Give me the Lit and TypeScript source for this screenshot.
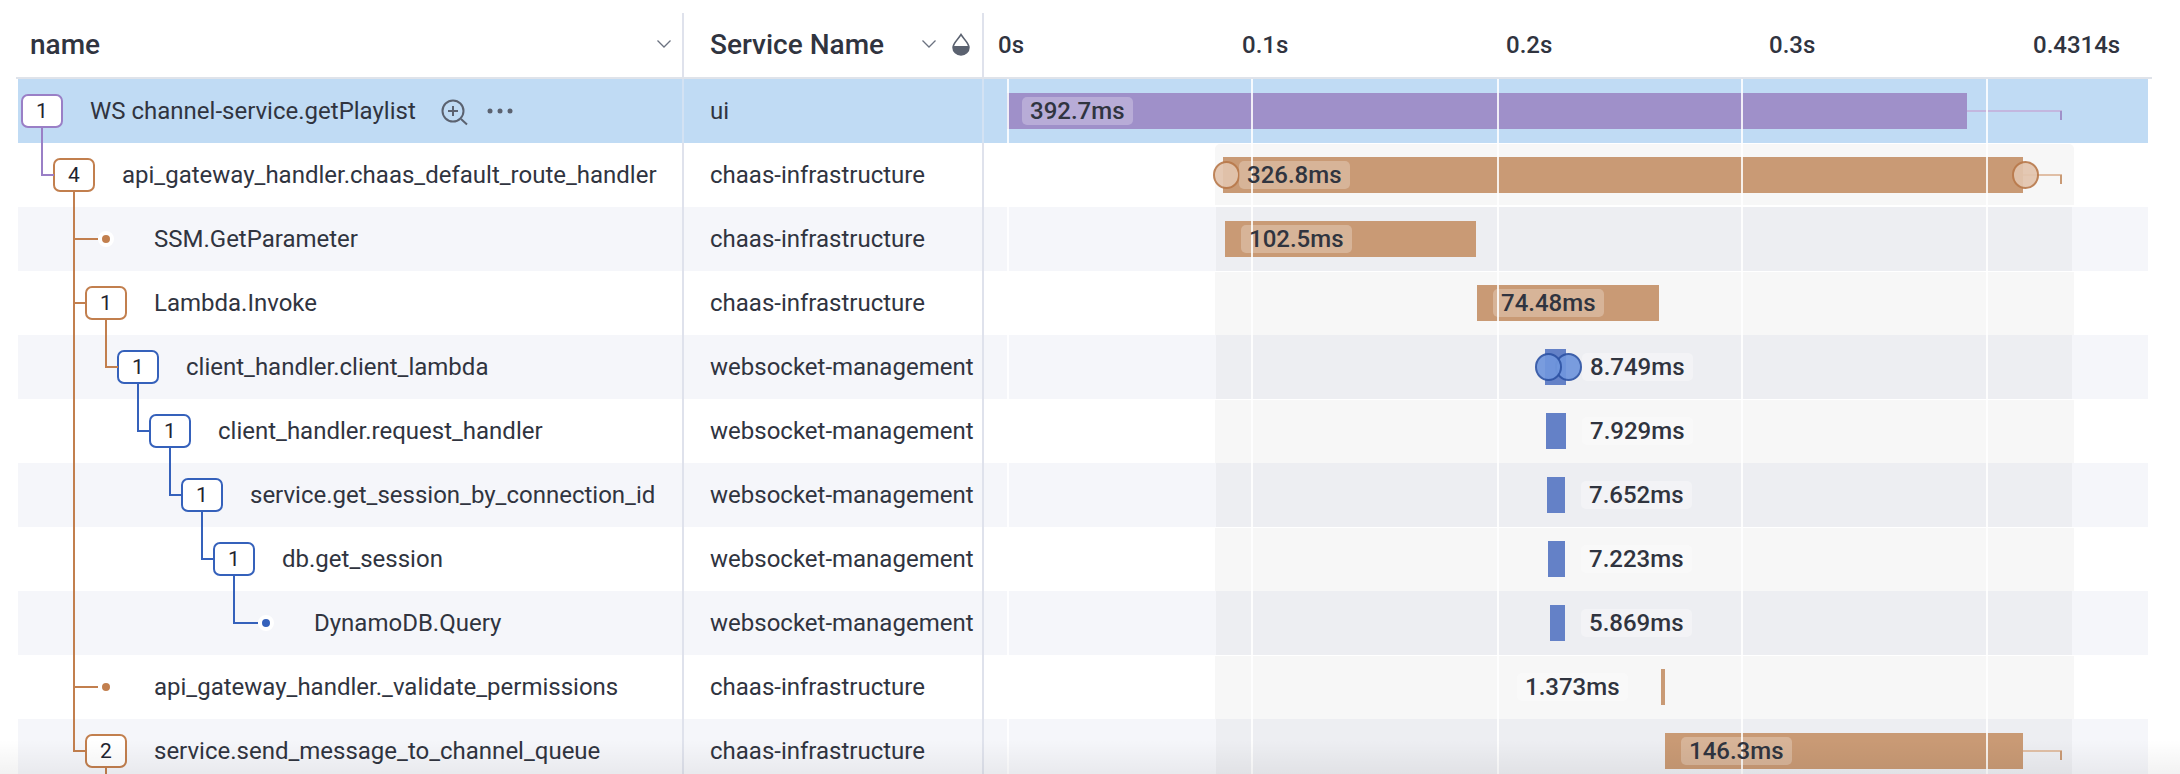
import { LitElement, html, svg, css } from 'lit';
import { customElement } from 'lit/decorators.js';

const ROW_H = 64;
const TL_X = 984; // left edge of the timeline column, page coords
const ROW_TOP = 79;

const COLORS: Record<string, { line: string; bar: string; whisker: string; halo: string; ring: string }> = {
  purple: { line: '#9a7fc6', bar: '#9f90c9', whisker: '#c3b7df', halo: '#b3a7d6', ring: '#8a6fb8' },
  orange: { line: '#c27f4e', bar: '#c99a75', whisker: '#e0bfa6', halo: '#e3c5ae', ring: '#b97a4c' },
  blue: { line: '#3561bb', bar: '#6481c7', whisker: '#a9bbe3', halo: '#7096dd', ring: '#2f54a5' },
};

interface Span {
  name: string;
  service: string;
  depth: number;
  parent: number;
  color: string;
  count?: number;
  bar: [number, number];
  label: number;
  whisker?: number;
  circles?: number[];
}

const spans: Span[] = [
  { name: 'WS channel-service.getPlaylist', service: 'ui', depth: 0, parent: -1, color: 'purple', count: 1, bar: [1007, 1967], label: 1022, whisker: 2062 },
  { name: 'api_gateway_handler.chaas_default_route_handler', service: 'chaas-infrastructure', depth: 1, parent: 0, color: 'orange', count: 4, bar: [1223, 2023], label: 1239, whisker: 2062, circles: [1226, 2025] },
  { name: 'SSM.GetParameter', service: 'chaas-infrastructure', depth: 2, parent: 1, color: 'orange', bar: [1225, 1476], label: 1241 },
  { name: 'Lambda.Invoke', service: 'chaas-infrastructure', depth: 2, parent: 1, color: 'orange', count: 1, bar: [1477, 1659], label: 1493 },
  { name: 'client_handler.client_lambda', service: 'websocket-management', depth: 3, parent: 3, color: 'blue', count: 1, bar: [1545, 1566], label: 1582, circles: [1568, 1548] },
  { name: 'client_handler.request_handler', service: 'websocket-management', depth: 4, parent: 4, color: 'blue', count: 1, bar: [1546, 1566], label: 1582 },
  { name: 'service.get_session_by_connection_id', service: 'websocket-management', depth: 5, parent: 5, color: 'blue', count: 1, bar: [1547, 1565], label: 1581 },
  { name: 'db.get_session', service: 'websocket-management', depth: 6, parent: 6, color: 'blue', count: 1, bar: [1548, 1565], label: 1581 },
  { name: 'DynamoDB.Query', service: 'websocket-management', depth: 7, parent: 7, color: 'blue', bar: [1550, 1565], label: 1581 },
  { name: 'api_gateway_handler._validate_permissions', service: 'chaas-infrastructure', depth: 2, parent: 1, color: 'orange', bar: [1661, 1665], label: 1517 },
  { name: 'service.send_message_to_channel_queue', service: 'chaas-infrastructure', depth: 2, parent: 1, color: 'orange', count: 2, bar: [1665, 2023], label: 1681, whisker: 2062 },
];

const durations = ['392.7ms', '326.8ms', '102.5ms', '74.48ms', '8.749ms', '7.929ms', '7.652ms', '7.223ms', '5.869ms', '1.373ms', '146.3ms'];

const axis = [
  { text: '0s', x: 998 },
  { text: '0.1s', x: 1242 },
  { text: '0.2s', x: 1506 },
  { text: '0.3s', x: 1769 },
  { text: '0.4314s', x: 2033 },
];
const ticks = [1007, 1251, 1497, 1741, 1986];

const chevron = html`<svg class="chev" width="16" height="10" viewBox="0 0 16 10"><path d="M1.5 1.5 8 8l6.500-6.500" fill="none" stroke="#6b7280" stroke-width="1.3"/></svg>`;

@customElement('app-root')
export class AppRoot extends LitElement {
  static styles = css`
    :host {
      display: block;
      position: relative;
      width: 2180px;
      height: 774px;
      overflow: hidden;
      background: #fff;
      font-family: Roboto, 'Liberation Sans', sans-serif;
      color: #30343f;
    }
    .head {
      display: grid;
      grid-template-columns: 666px 300px 1fr;
      margin: 13px 28px 0 16px;
      padding-left: 2px;
      height: 66px;
      border-bottom: 2px solid #dfe3ea;
      box-sizing: border-box;
      font-size: 28px;
      font-weight: 500;
    }
    .hcell {
      display: flex;
      align-items: center;
      justify-content: space-between;
      border-right: 2px solid #dfe2ec;
      padding-bottom: 2px;
    }
    .hname { padding-left: 12px; padding-right: 10px; }
    .hservice { padding-left: 26px; padding-right: 12px; }
    .hservice .tools { display: flex; align-items: center; gap: 15px; }
    .axis { position: relative; }
    .axis span {
      position: absolute;
      top: 18px;
      font-size: 24px;
      line-height: 28px;
      font-weight: 500;
    }
    .rows {
      position: relative;
      margin: 0 32px 0 18px;
    }
    .row {
      display: grid;
      grid-template-columns: 666px 300px 1fr;
      height: 64px;
      font-size: 24px;
      position: relative;
    }
    .row.alt { background: #f5f6fa; }
    .row.sel { background: #c0dbf4; }
    .cell {
      display: flex;
      align-items: center;
      border-right: 2px solid #dfe2ec;
      white-space: nowrap;
      position: relative;
      z-index: 1;
    }
    .sel .cell { border-right-color: #d3e2f3; }
    .service { padding-left: 26px; }
    .badge {
      box-sizing: border-box;
      width: 42px;
      height: 34px;
      margin-left: 3px;
      flex: none;
      border: 2px solid;
      border-radius: 7px;
      background: #fff;
      display: flex;
      align-items: center;
      justify-content: center;
      font-size: 21px;
      color: #1f2430;
    }
    .dot {
      width: 42px;
      margin-left: 3px;
      flex: none;
      display: flex;
      justify-content: center;
    }
    .dot i {
      display: block;
      width: 8px;
      height: 8px;
      border-radius: 50%;
      border: 4px solid #fff;
    }
    .label { margin-left: 27px; }
    .actions { display: flex; align-items: center; gap: 18px; margin-left: 25px; }
    .actions .zoom { margin-top: 5px; }
    .timeline { border-right: none; z-index: auto; }
    .band {
      position: absolute;
      top: 0;
      bottom: 0;
      left: 232px;
      width: 856px;
      background: #edeef2;
    }
    .band.even {
      top: 1px;
      bottom: 0;
      left: 231px;
      width: 859px;
      background: #f7f7f7;
    }
    .band.first { bottom: 2px; border-radius: 5px 5px 0 0; }
    .bar { position: absolute; top: 14px; height: 36px; }
    .whisker { position: absolute; top: 31px; height: 2px; }
    .cap { position: absolute; top: 32px; height: 9px; width: 2px; }
    .circle {
      position: absolute;
      top: 18px;
      width: 27px;
      height: 28px;
      box-sizing: border-box;
      border: 2px solid;
      border-radius: 50%;
      opacity: 0.92;
    }
    .pill {
      position: absolute;
      top: 18px;
      height: 28px;
      padding: 0 8px;
      border-radius: 5px;
      display: flex;
      align-items: center;
      font-weight: 500;
      font-size: 24px;
      background: rgba(255, 255, 255, 0.26);
      z-index: 3;
    }
    .pill.out { background: rgba(255, 255, 255, 0.33); }
    .tick {
      position: absolute;
      top: 0;
      bottom: 0;
      width: 2px;
      background: rgba(255, 255, 255, 0.85);
      z-index: 2;
    }
    .links { position: absolute; left: 0; top: 0; z-index: 1; pointer-events: none; }
    .fade {
      position: absolute;
      left: 0;
      right: 0;
      bottom: 0;
      height: 34px;
      background: linear-gradient(rgba(0, 0, 0, 0), rgba(0, 0, 0, 0.05));
      z-index: 5;
    }
  `;

  // tree lines, drawn from the parent's badge down to the child's row
  private links() {
    const centerX = (depth: number) => 24 + depth * 32;
    return spans.map((s, i) => {
      if (s.parent < 0) return '';
      const p = spans[s.parent];
      const x = centerX(p.depth);
      const y = i * ROW_H + ROW_H / 2;
      const y0 = s.parent * ROW_H + ROW_H / 2 + 15;
      const endX = centerX(s.depth) - (s.count ? 20 : 8);
      return svg`<path d="M${x} ${y0}V${y}H${endX}" fill="none" stroke=${COLORS[p.color].line} stroke-width="2"/>`;
    });
  }

  private renderTimeline(s: Span, i: number) {
    const c = COLORS[s.color];
    const [x0, x1] = s.bar;
    const onBar = s.label + 40 > x0 && s.label < x1;
    return html`<div class="cell timeline">
      ${i > 0
        ? html`<div class="band ${i % 2 ? 'even' : ''} ${i === 1 ? 'first' : ''}"></div>`
        : ''}
      <div class="bar" style="left:${x0 - TL_X}px;width:${x1 - x0}px;background:${c.bar}"></div>
      ${s.whisker
        ? html`<div class="whisker" style="left:${x1 - TL_X}px;width:${s.whisker - x1}px;background:${c.whisker}"></div>
            <div class="cap" style="left:${s.whisker - 2 - TL_X}px;background:${c.bar}"></div>`
        : ''}
      ${(s.circles ?? []).map(
        (cx) => html`<div class="circle" style="left:${cx - 13.5 - TL_X}px;background:${c.halo};border-color:${c.ring}"></div>`,
      )}
      <div class="pill ${onBar ? '' : 'out'}" style="left:${s.label - TL_X}px">${durations[i]}</div>
    </div>`;
  }

  private renderRow(s: Span, i: number) {
    const color = COLORS[s.color].line;
    return html`<div class="row ${i % 2 === 0 && i > 0 ? 'alt' : ''} ${i === 0 ? 'sel' : ''}">
      <div class="cell" style="padding-left:${s.depth * 32}px">
        ${s.count
          ? html`<div class="badge" style="border-color:${color}">${s.count}</div>`
          : html`<div class="dot"><i style="background:${color}"></i></div>`}
        <span class="label">${s.name}</span>
        ${i === 0
          ? html`<div class="actions">
              <svg class="zoom" width="28" height="30" viewBox="0 0 28 30">
                <circle cx="12" cy="12" r="10.5" fill="none" stroke="#5b6270" stroke-width="2"/>
                <path d="M12 7v10M7 12h10M20 20l6 5.500" fill="none" stroke="#5b6270" stroke-width="2"/>
              </svg>
              <svg width="26" height="6" viewBox="0 0 26 6" fill="#5b6270">
                <circle cx="3" cy="3" r="2.500"/><circle cx="13" cy="3" r="2.500"/><circle cx="23" cy="3" r="2.500"/>
              </svg>
            </div>`
          : ''}
      </div>
      <div class="cell service">${s.service}</div>
      ${this.renderTimeline(s, i)}
    </div>`;
  }

  render() {
    const h = 774 - ROW_TOP;
    return html`
      <div class="head">
        <div class="hcell hname"><span>name</span>${chevron}</div>
        <div class="hcell hservice">
          <span>Service Name</span>
          <div class="tools">
            ${chevron}
            <svg width="18" height="23" viewBox="0 0 18 23">
              <path d="M1 14.500C1 10 6 6.500 9 1.500c3 5 8 8.500 8 13a8 7.500 0 0 1-16 0Z" fill="#fff" stroke="#5b6270" stroke-width="1.500"/>
              <path d="M1 13h16v1.500a8 7.500 0 0 1-16 0Z" fill="#5b6270"/>
            </svg>
          </div>
        </div>
        <div class="axis">
          ${axis.map((a) => html`<span style="left:${a.x - TL_X}px">${a.text}</span>`)}
        </div>
      </div>
      <div class="rows">
        ${spans.map((s, i) => this.renderRow(s, i))}
        <svg class="links" width="680" height=${h}>${this.links()}
          <path d="M88 ${ROW_H * 10 + 49}V${h}" fill="none" stroke=${COLORS.orange.line} stroke-width="2"/>
        </svg>
        ${ticks.map((x) => html`<div class="tick" style="left:${x - 18}px"></div>`)}
      </div>
      <div class="fade"></div>
    `;
  }
}
